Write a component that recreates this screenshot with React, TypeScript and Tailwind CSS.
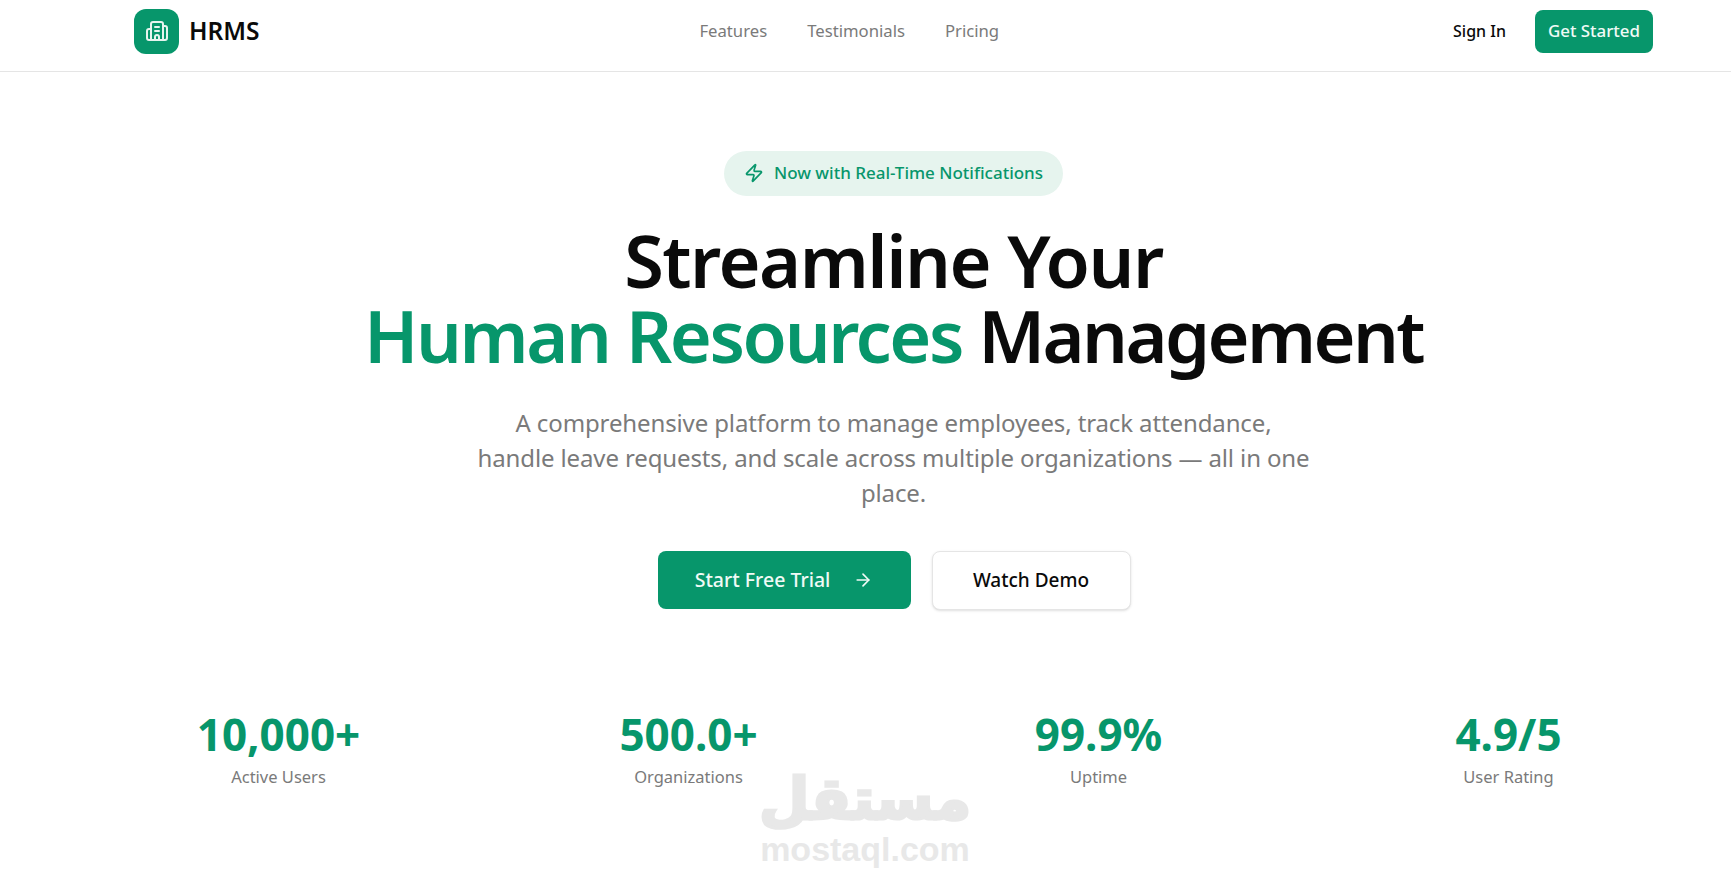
import { ArrowRight, Building2, Zap } from "lucide-react";

const stats = [
  ["10,000+", "Active Users"],
  ["500.0+", "Organizations"],
  ["99.9%", "Uptime"],
  ["4.9/5", "User Rating"],
];

export default function App() {
  return (
    <div className="relative h-[887px] w-full overflow-hidden bg-white font-['Noto_Sans',sans-serif] text-[#0a0a0a]">
      <header className="flex h-[72px] items-center justify-between border-b border-[#e5e5e5] pb-[9px] pl-[134px] pr-[78px]">
        <div className="flex items-center gap-[10px]">
          <div className="flex h-[45px] w-[45px] items-center justify-center rounded-xl bg-[#07966b] text-[#e6f4ee]">
            <Building2 size={24} strokeWidth={2} />
          </div>
          <span className="text-[24.5px] font-semibold">HRMS</span>
        </div>
        <nav className="mr-[14px] flex gap-10 text-[16.7px] text-[#7a7a7a]">
          <span>Features</span>
          <span>Testimonials</span>
          <span>Pricing</span>
        </nav>
        <div className="flex items-center gap-[29px]">
          <span className="text-base font-medium">Sign In</span>
          <span className="flex h-[43px] items-center rounded-lg bg-[#07966b] px-[13px] text-[16.9px] font-medium text-[#f0faf6]">Get Started</span>
        </div>
      </header>
      <main className="pl-[134px] pr-[78px]">
        <section className="flex flex-col items-center pt-[79px]">
          <div className="flex h-[45px] items-center gap-[10px] rounded-full bg-[#e6f4ee] px-[20px] pb-[1px] text-[17px] font-medium text-[#07966b]">
            <Zap size={20} strokeWidth={2} />
            <span>Now with Real-Time Notifications</span>
          </div>
          <h1 className="mt-[27px] text-center text-[72px] leading-[75px] font-semibold tracking-[-2.6px]">
            <span className="tracking-[-1.5px]">Streamline Your</span>
            <br />
            <span className="tracking-[-2.4px] text-[#07966b]">Human Resources</span> Management
          </h1>
          <p className="mt-[32px] w-[834px] text-center text-[24px] leading-[35px] tracking-[-0.12px] text-[#7a7a7a]">
            A comprehensive platform to manage employees, track attendance, handle leave requests, and scale across multiple organizations — all in one place.
          </p>
          <div className="mt-[41px] ml-[1px] flex gap-[21px]">
            <span className="flex h-[58px] w-[253px] items-center justify-center gap-[23px] rounded-lg bg-[#07966b] text-[19.5px] font-medium text-[#f0faf6]">
              Start Free Trial
              <ArrowRight size={20} />
            </span>
            <span className="flex h-[59px] w-[199px] items-center justify-center rounded-lg border border-[#e5e5e5] bg-white text-[19px] font-medium shadow-sm">Watch Demo</span>
          </div>
        </section>
        <section className="mt-[100px] grid grid-cols-4 gap-[121px] text-center">
          {stats.map(([value, label]) => (
            <div key={label}>
              <div className="text-[44px] leading-[48px] font-bold text-[#07966b]">{value}</div>
              <div className="mt-[7px] text-[16.5px] text-[#7a7a7a]">{label}</div>
            </div>
          ))}
        </section>
      </main>
      <div className="absolute left-[750px] top-[766px] flex w-[230px] flex-col items-center text-[#e8e8e8]">
        <span className="font-['DejaVu_Sans',sans-serif] text-[58px] leading-[66px] font-bold [-webkit-text-stroke:3px_#e8e8e8]" dir="rtl">مستقل</span>
        <span className="font-['Liberation_Sans',sans-serif] text-[34px] leading-[34px] font-bold">mostaql.com</span>
      </div>
    </div>
  );
}
